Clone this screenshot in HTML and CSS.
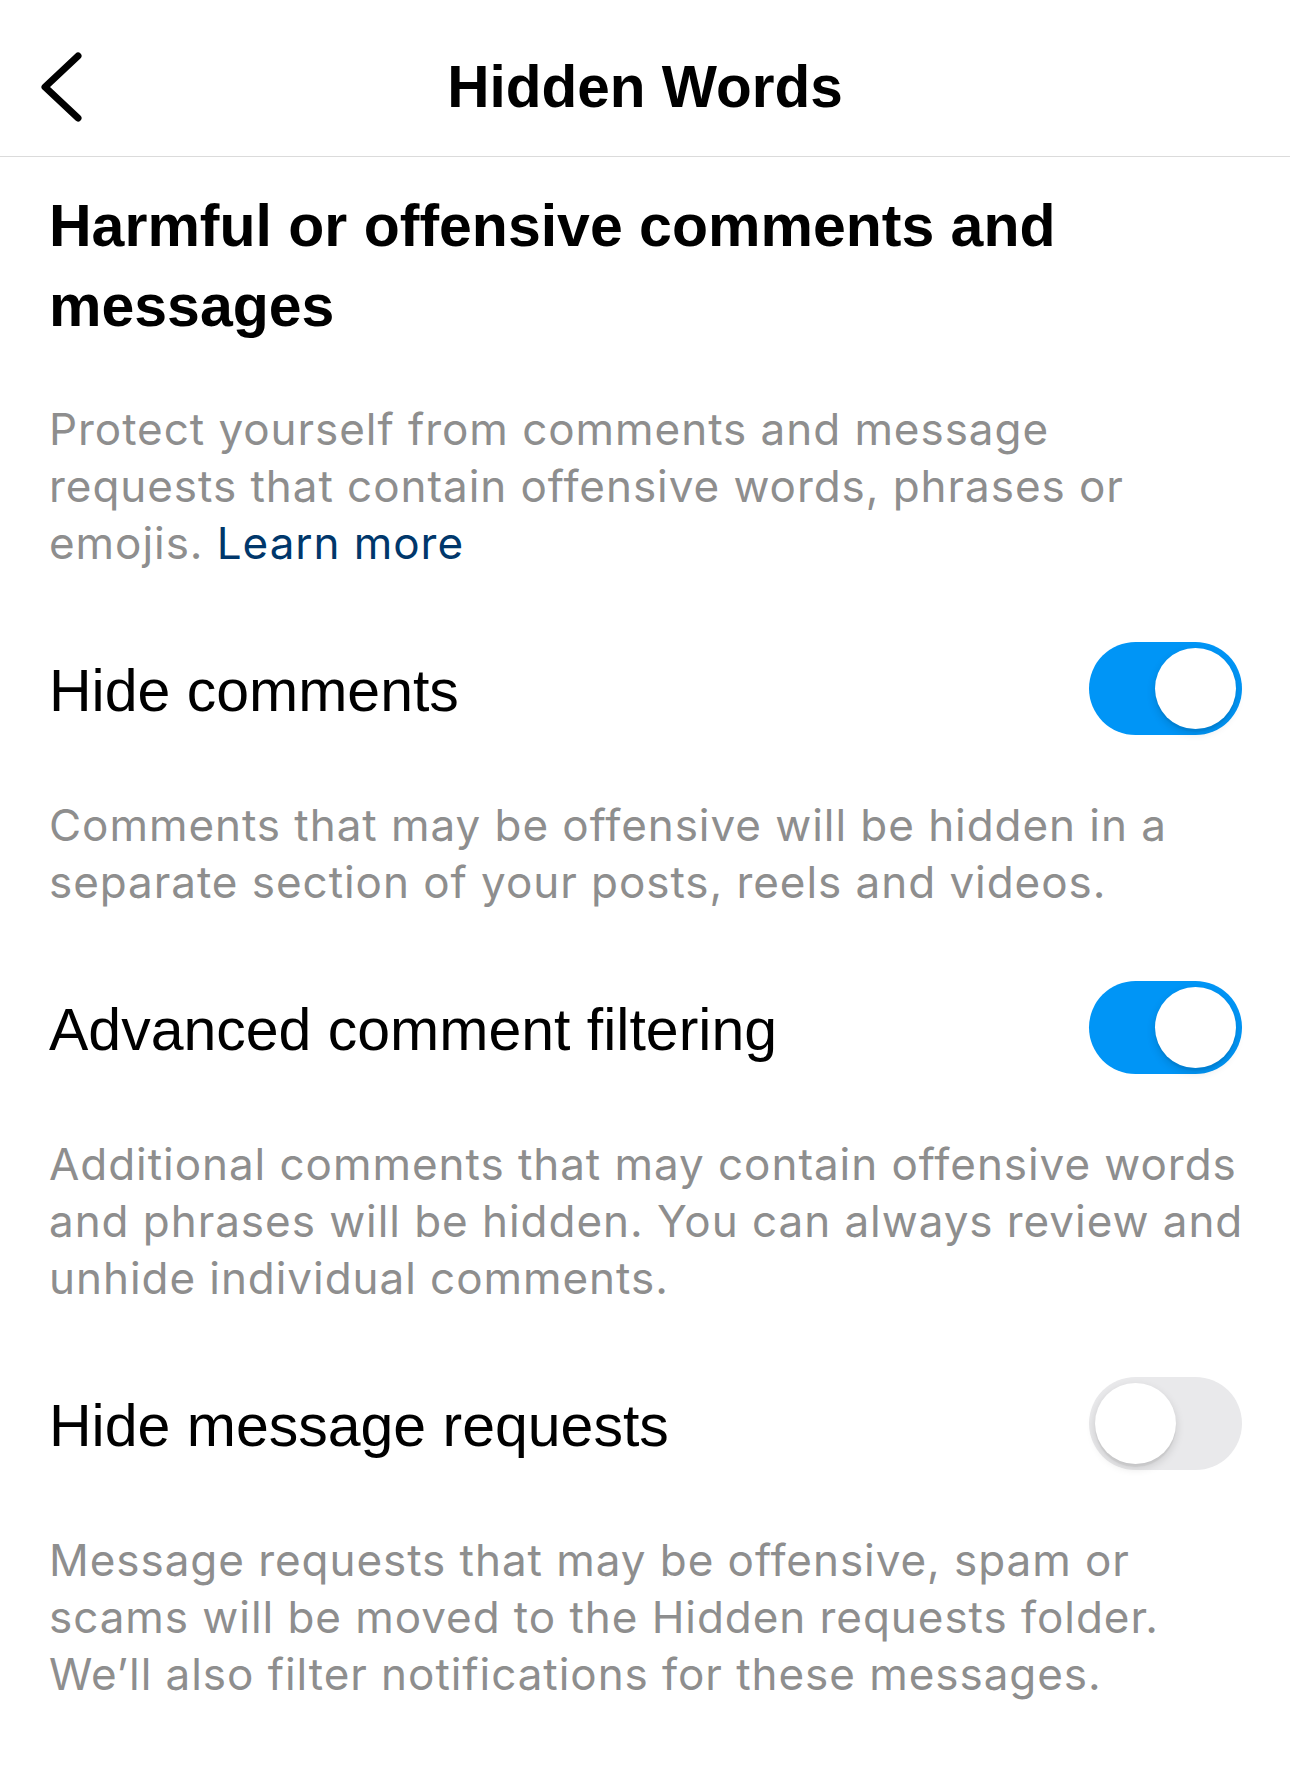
FILE: index.html
```html
<!DOCTYPE html>
<html lang="en">
<head>
<meta charset="utf-8">
<title>Hidden Words</title>
<link rel="stylesheet" href="styles.css">
</head>
<body>
  <header class="nav">
    <a class="nav-back" href="#" aria-label="Back">
      <svg width="52" height="80" viewBox="0 0 52 80" aria-hidden="true">
        <path d="M42 9 L9 40 L42 71" fill="none" stroke="#000" stroke-width="7" stroke-linecap="round" stroke-linejoin="round"/>
      </svg>
    </a>
    <h1 class="nav-title">Hidden Words</h1>
    <span class="nav-spacer"></span>
  </header>

  <main class="content">
    <h2 class="section-title">Harmful or offensive comments and messages</h2>
    <p class="note note-intro">Protect yourself from comments and message<br>requests that contain offensive words, phrases or<br>emojis. <a class="link" href="#">Learn more</a></p>

    <div class="setting">
      <span class="setting-label">Hide comments</span>
      <span class="switch is-on" role="switch" aria-checked="true"><span class="knob"></span></span>
    </div>
    <p class="note">Comments that may be offensive will be hidden in a<br>separate section of your posts, reels and videos.</p>

    <div class="setting">
      <span class="setting-label">Advanced comment filtering</span>
      <span class="switch is-on" role="switch" aria-checked="true"><span class="knob"></span></span>
    </div>
    <p class="note">Additional comments that may contain offensive words<br>and phrases will be hidden. You can always review and<br>unhide individual comments.</p>

    <div class="setting">
      <span class="setting-label">Hide message requests</span>
      <span class="switch" role="switch" aria-checked="false"><span class="knob"></span></span>
    </div>
    <p class="note">Message requests that may be offensive, spam or<br>scams will be moved to the Hidden requests folder.<br>We’ll also filter notifications for these messages.</p>
  </main>
</body>
</html>
```

FILE: styles.css
```css
html, body {
  margin: 0;
  background: #fff;
}

body {
  font-family: "Liberation Sans", Arial, sans-serif;
  color: #000;
}

/* Top navigation bar */
.nav {
  box-sizing: border-box;
  height: 157px;
  padding-top: 18px;
  border-bottom: 1px solid #dbdbdb;
  display: grid;
  grid-template-columns: 1fr auto 1fr;
  align-items: center;
}

.nav-back {
  justify-self: start;
  margin-left: 36px;
  display: block;
  width: 52px;
  height: 80px;
}

.nav-back svg {
  display: block;
}

.nav-title {
  margin: 0;
  font-size: 58.5px;
  font-weight: 700;
  line-height: 70px;
  white-space: nowrap;
}

/* Page body */
.content {
  padding: 0 48px 40px 49px;
}

.section-title {
  margin: 29px 0 0;
  font-size: 59px;
  font-weight: 700;
  line-height: 80px;
}

.note {
  margin: 62px 0 0;
  font-family: Inter, "Liberation Sans", sans-serif;
  font-size: 44px;
  line-height: 57px;
  letter-spacing: 0.95px;
  color: #8e8e8e;
  white-space: nowrap;
}

.note-intro {
  margin-top: 55px;
}

.link {
  color: #00376b;
  text-decoration: none;
}

/* Setting row with a toggle */
.setting {
  margin-top: 70px;
  display: flex;
  align-items: center;
  justify-content: space-between;
}

.setting-label {
  font-size: 59px;
  line-height: 88px;
  padding-top: 5px;
}

.switch {
  box-sizing: border-box;
  flex: none;
  width: 153px;
  height: 93px;
  padding: 6px;
  border-radius: 46.5px;
  background: #e9e9eb;
  display: flex;
  justify-content: flex-start;
}

.switch.is-on {
  background: #0095f6;
  justify-content: flex-end;
}

.knob {
  width: 81px;
  height: 81px;
  border-radius: 50%;
  background: #fff;
  box-shadow: 0 4px 10px rgba(0, 0, 0, 0.14), 0 3px 1px rgba(0, 0, 0, 0.05);
}
```
